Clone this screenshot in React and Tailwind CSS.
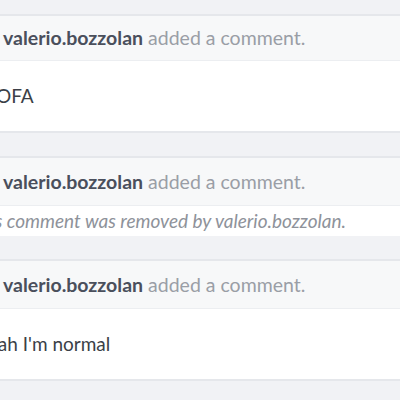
export default function App() {
  const font = { fontFamily: 'Lato, "Noto Sans", sans-serif' };
  const Header = ({ h }) => (
    <div className={`flex items-center bg-[#f7f8f9] border-b border-[#eceef1] ${h}`}>
      <div className="pl-[3px] text-[19.5px] whitespace-nowrap">
        <span className="font-bold text-[#4a4f5c]">valerio.bozzolan</span>{' '}
        <span className="text-[#9a9ea6]">added a comment.</span>
      </div>
    </div>
  );
  return (
    <div className="w-[400px] h-[400px] overflow-hidden bg-[#f1f2f5]" style={font}>
      <div className="h-[14px]" />
      <div className="border-y-2 border-[#e5e7eb] bg-white">
        <Header h="h-[45px]" />
        <div className="h-[70px] flex items-center text-[19px] text-[#3b3f47] whitespace-nowrap">
          <span className="-ml-[4px]">OFA</span>
        </div>
      </div>
      <div className="h-[23px]" />
      <div className="border-t-2 border-[#e5e7eb]">
        <Header h="h-[48px]" />
        <div className="h-[30px] bg-white flex items-center text-[19px] italic text-[#8e929a] whitespace-nowrap">
          <span className="-ml-[30px]">This comment was removed by valerio.bozzolan.</span>
        </div>
      </div>
      <div className="h-[23px]" />
      <div className="border-y-2 border-[#e5e7eb] bg-white">
        <Header h="h-[48px]" />
        <div className="h-[70px] flex items-center text-[19px] text-[#3b3f47] whitespace-nowrap">
          <span className="-ml-[22px]">Yeah I'm normal</span>
        </div>
      </div>
    </div>
  );
}
